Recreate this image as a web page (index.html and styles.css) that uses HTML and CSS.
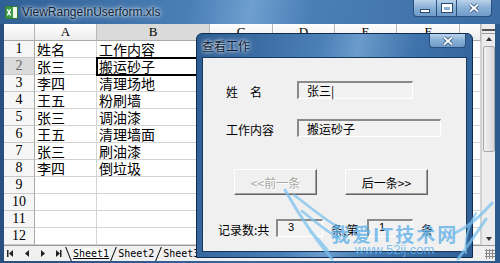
FILE: index.html
```html
<!DOCTYPE html>
<html lang="zh-CN">
<head>
    <meta charset="UTF-8">
    <title>ViewRangeInUserform.xls</title>
    <link rel="stylesheet" href="styles.css">
</head>
<body>
    <div class="window">
        <!-- Excel title bar -->
        <div class="titlebar">
            <svg class="app-icon" width="13" height="13" viewBox="0 0 13 13">
                <rect x="0.5" y="0.5" width="12" height="12" fill="#eef6e8" stroke="#2f7a35"/>
                <rect x="1" y="1" width="7" height="11" fill="#3c9a44"/>
                <path d="M2.3 3.3l3.4 6M5.7 3.3l-3.4 6" stroke="#fff" stroke-width="1.4"/>
            </svg>
            <span class="title">ViewRangeInUserform.xls</span>
            <div class="caption">
                <span class="cbtn min"><i class="min-glyph"></i></span>
                <span class="cbtn max"><i class="max-glyph"></i></span>
                <span class="cbtn close">
                    <svg width="12" height="10" viewBox="0 0 12 10"><path d="M2 1.5l8 7M10 1.5l-8 7" stroke="#27466b" stroke-width="3.4"/><path d="M2 1.5l8 7M10 1.5l-8 7" stroke="#fff" stroke-width="2"/></svg>
                </span>
            </div>
        </div>

        <!-- worksheet -->
        <div class="workarea">
            <div class="sheet">
                <div class="row hdr"><span class="corner"></span><span>A</span><span class="sel">B</span><span>C</span><span>D</span><span>E</span><span>F</span><span></span></div>
                <div class="row"><span class="rn">1</span><span>姓名</span><span>工作内容</span><span></span><span></span><span></span><span></span><span></span></div>
                <div class="row"><span class="rn sel">2</span><span>张三</span><span class="active">搬运砂子</span><span></span><span></span><span></span><span></span><span></span></div>
                <div class="row"><span class="rn">3</span><span>李四</span><span>清理场地</span><span></span><span></span><span></span><span></span><span></span></div>
                <div class="row"><span class="rn">4</span><span>王五</span><span>粉刷墙</span><span></span><span></span><span></span><span></span><span></span></div>
                <div class="row"><span class="rn">5</span><span>张三</span><span>调油漆</span><span></span><span></span><span></span><span></span><span></span></div>
                <div class="row"><span class="rn">6</span><span>王五</span><span>清理墙面</span><span></span><span></span><span></span><span></span><span></span></div>
                <div class="row"><span class="rn">7</span><span>张三</span><span>刷油漆</span><span></span><span></span><span></span><span></span><span></span></div>
                <div class="row"><span class="rn">8</span><span>李四</span><span>倒垃圾</span><span></span><span></span><span></span><span></span><span></span></div>
                <div class="row"><span class="rn">9</span><span></span><span></span><span></span><span></span><span></span><span></span><span></span></div>
                <div class="row"><span class="rn">10</span><span></span><span></span><span></span><span></span><span></span><span></span><span></span></div>
                <div class="row"><span class="rn">11</span><span></span><span></span><span></span><span></span><span></span><span></span><span></span></div>
                <div class="row"><span class="rn">12</span><span></span><span></span><span></span><span></span><span></span><span></span><span></span></div>
            </div>
            <div class="vscroll">
                <span class="split"></span>
                <span class="arrow up"></span>
                <span class="thumb"></span>
                <span class="track"></span>
                <span class="arrow down"></span>
            </div>
        </div>

        <!-- sheet tabs -->
        <div class="tabbar">
            <svg class="nav" width="60" height="9" viewBox="0 0 60 9">
                <rect x="3" y="1" width="1.5" height="7" fill="#222"/>
                <path d="M9 1v7L5 4.5z" fill="#222"/>
                <path d="M25 1v7l-4-3.5z" fill="#222"/>
                <path d="M37 1v7l4-3.5z" fill="#222"/>
                <path d="M52 1v7l4-3.5z" fill="#222"/>
                <rect x="56" y="1" width="1.5" height="7" fill="#222"/>
            </svg>
            <i class="slash back"></i>
            <span class="tab current">Sheet1</span>
            <i class="slash"></i>
            <span class="tab">Sheet2</span>
            <i class="slash"></i>
            <span class="tab">Sheet3</span>
            <span class="grip"></span>
        </div>

        <!-- UserForm dialog -->
        <div class="dialog">
            <div class="dlg-title">
                <span class="dlg-caption">查看工作</span>
                <span class="dlg-close">
                    <svg width="12" height="10" viewBox="0 0 12 10"><path d="M2 1.5l8 7M10 1.5l-8 7" stroke="#27466b" stroke-width="3.4"/><path d="M2 1.5l8 7M10 1.5l-8 7" stroke="#fff" stroke-width="2"/></svg>
                </span>
            </div>
            <div class="dlg-body">
                <div class="field">
                    <span class="label">姓　名</span>
                    <span class="textbox name">张三|</span>
                </div>
                <div class="field">
                    <span class="label">工作内容</span>
                    <span class="textbox job">搬运砂子</span>
                </div>
                <div class="buttons">
                    <span class="btn disabled">&lt;&lt;前一条</span>
                    <span class="btn">后一条&gt;&gt;</span>
                </div>
                <div class="record">
                    <span class="rec-label">记录数:共</span>
                    <span class="textbox num">3</span>
                    <span class="rec-mid">条,第</span>
                    <span class="textbox num">1</span>
                    <span class="rec-end">条</span>
                </div>
            </div>
        </div>

        <!-- site watermark -->
        <svg class="wings" width="220" height="80" viewBox="0 0 220 80">
            <g fill="none" stroke="#7cc2ef" stroke-linecap="round" opacity="0.75">
                <path d="M5 7 C 18 30, 32 52, 52 76" stroke-width="3"/>
                <path d="M14 12 C 30 24, 44 36, 58 44" stroke-width="2.5"/>
                <path d="M22 28 C 34 38, 46 48, 60 56" stroke-width="2.5"/>
                <path d="M30 48 C 38 56, 44 62, 48 68" stroke-width="2.5"/>
                <path d="M212 20 C 200 34, 188 44, 175 50" stroke-width="3"/>
                <path d="M206 36 C 198 48, 190 60, 178 76" stroke-width="3"/>
                <path d="M196 30 C 188 44, 184 56, 186 70" stroke-width="2"/>
            </g>
        </svg>
        <div class="mark">
            <span class="mark-big">我爱IT技术网</span>
            <span class="mark-url">www.52ij.com</span>
        </div>
    </div>
</body>
</html>
```

FILE: styles.css
```css
* {
    box-sizing: border-box;
}
body {
    margin: 0;
    font-family: "Noto Sans CJK SC", sans-serif;
}
.window {
    position: relative;
    width: 500px;
    height: 263px;
    display: flex;
    flex-direction: column;
    padding-bottom: 6px;
    background: linear-gradient(90deg, #274f7f, #3566a0 50%, #2c5a8e);
    overflow: hidden;
}

/* title bar */
.titlebar {
    height: 24px;
    flex-shrink: 0;
    display: flex;
    align-items: center;
    padding-left: 5px;
    background: linear-gradient(100deg, #2f5f95 0%, #4a7fb6 38%, #6e9fcf 50%, #4a7fb6 62%, #3a6ca3 100%);
}
.app-icon {
    margin-right: 4px;
}
.title {
    font-family: "Liberation Sans", sans-serif;
    font-size: 12px;
    color: #0d1f38;
    text-shadow: 0 0 3px #fff, 0 0 6px rgba(255, 255, 255, 0.8);
}
.caption {
    margin-left: auto;
    margin-right: 8px;
    align-self: flex-start;
    display: flex;
}
.cbtn {
    height: 17px;
    display: flex;
    align-items: center;
    justify-content: center;
    background: linear-gradient(#b9d2ea, #88afd6 50%, #6f9bc8);
    border: 1px solid #284f7e;
    border-top: none;
}
.cbtn.min {
    width: 24px;
    border-radius: 0 0 0 4px;
}
.cbtn.max {
    width: 20px;
    border-left: none;
}
.cbtn.close {
    width: 35px;
    border-left: none;
    border-radius: 0 0 4px 0;
}
.min-glyph {
    width: 10px;
    height: 4px;
    margin-top: 6px;
    background: #fff;
    border: 1px solid #2b4a70;
}
.max-glyph {
    width: 10px;
    height: 8px;
    border: 2px solid #fff;
    border-top-width: 3px;
    outline: 1px solid #2b4a70;
}

/* worksheet */
.workarea {
    flex: 1;
    display: flex;
    margin: 0 5px 0 4px;
}
.sheet {
    flex: 1;
    display: flex;
    flex-direction: column;
    background: #fff;
}
.row {
    flex: 1;
    display: grid;
    grid-template-columns: 31px 62px 113px 63px 62px 62px 63px 1fr;
}
.row.hdr {
    flex: 0 0 17px;
}
.row > span {
    display: flex;
    align-items: center;
    padding-left: 2px;
    font-size: 14px;
    line-height: 16px;
    white-space: nowrap;
    border-right: 1px solid #d4d4d4;
    border-bottom: 1px solid #d4d4d4;
}
.hdr > span {
    justify-content: center;
    padding-left: 0;
    font-family: "Liberation Serif", serif;
    font-size: 13px;
    background: linear-gradient(#ffffff, #ececec);
    border-right-color: #b8b8b8;
    border-bottom-color: #a8a8a8;
}
.row > .rn {
    justify-content: center;
    padding-left: 0;
    font-family: "Liberation Serif", serif;
    background: #f6f6f6;
    border-right-color: #a8a8a8;
    border-bottom-color: #c8c8c8;
}
.row > .sel {
    background: #dadada;
}
.rn.sel {
    color: #666;
}
.active {
    outline: 2px solid #000;
    outline-offset: -1px;
    position: relative;
}

/* vertical scroll bar */
.vscroll {
    width: 14px;
    display: flex;
    flex-direction: column;
    align-items: center;
    background: #ececec;
    border-left: 1px solid #d0d0d0;
}
.split {
    width: 13px;
    height: 5px;
    margin-top: 5px;
    border-top: 2px solid #555;
    border-bottom: 1px solid #999;
}
.arrow {
    width: 0;
    height: 0;
    margin: 3px 0;
    border-left: 3px solid transparent;
    border-right: 3px solid transparent;
}
.arrow.up {
    border-bottom: 4px solid #333;
}
.arrow.down {
    border-top: 4px solid #333;
    margin-bottom: 4px;
}
.thumb {
    width: 12px;
    height: 106px;
    margin-top: 2px;
    border: 1px solid #a8a8a8;
    border-radius: 2px;
    background: linear-gradient(90deg, #f2f2f2, #d8d8d8);
}
.track {
    flex: 1;
}

/* sheet tabs */
.tabbar {
    height: 16px;
    flex-shrink: 0;
    margin: 0 5px 0 4px;
    display: flex;
    align-items: center;
    background: #f0f0f0;
    border-top: 1px solid #9a9a9a;
    font-family: "DejaVu Sans Mono", monospace;
    font-size: 10px;
    color: #000;
}
.nav {
    flex-shrink: 0;
}
.slash {
    width: 0;
    height: 14px;
    margin: 0 4px;
    border-left: 1px solid #000;
    transform: skewX(-22deg);
}
.slash.back {
    transform: skewX(22deg);
}
.tab.current {
    text-decoration: underline;
    background: #fff;
}
.grip {
    margin-left: auto;
    width: 10px;
    height: 10px;
    background: radial-gradient(circle, #888 1px, transparent 1.2px) 0 0 / 3px 3px;
}

/* dialog */
.dialog {
    position: absolute;
    left: 196px;
    top: 33px;
    width: 277px;
    height: 225px;
    display: flex;
    flex-direction: column;
    padding: 0 5px 5px;
    border: 1px solid #0f2d52;
    border-radius: 6px 6px 0 0;
    background: linear-gradient(100deg, #2c5b91 0%, #4b80b7 40%, #6a9bcb 52%, #3f73ab 70%, #2e5e94 100%);
}
.dlg-title {
    height: 23px;
    display: flex;
    align-items: center;
}
.dlg-caption {
    font-size: 12px;
    color: #0d1f38;
    text-shadow: 0 0 3px #fff, 0 0 6px rgba(255, 255, 255, 0.8);
}
.dlg-close {
    margin-left: auto;
    margin-right: 1px;
    align-self: flex-start;
    width: 37px;
    height: 14px;
    display: flex;
    align-items: center;
    justify-content: center;
    background: linear-gradient(#b9d2ea, #88afd6 50%, #6f9bc8);
    border: 1px solid #284f7e;
    border-top: none;
    border-radius: 0 0 4px 4px;
}
.dlg-body {
    flex: 1;
    background: #f0f0f0;
    border: 1px solid #16385f;
    padding-top: 21px;
    font-size: 12px;
    color: #000;
}
.field {
    display: grid;
    grid-template-columns: 71px auto;
    align-items: center;
    margin-left: 23px;
    margin-bottom: 17px;
}
.label {
    padding-top: 4px;
}
.textbox {
    height: 18px;
    display: flex;
    align-items: center;
    padding-left: 8px;
    border-top: 2px solid #8a8a8a;
    border-left: 2px solid #8a8a8a;
    border-right: 1px solid #fff;
    border-bottom: 1px solid #fff;
    background: #f2f2f2;
}
.textbox.name {
    width: 116px;
}
.textbox.job {
    width: 144px;
}
.buttons {
    display: flex;
    gap: 28px;
    margin: 31px 0 0 31px;
}
.btn {
    width: 83px;
    height: 26px;
    display: flex;
    align-items: center;
    justify-content: center;
    background: #f0f0f0;
    border-top: 1px solid #fff;
    border-left: 1px solid #fff;
    border-right: 1px solid #646464;
    border-bottom: 1px solid #646464;
    box-shadow: inset -1px -1px #a0a0a0;
}
.btn.disabled {
    color: #a8a8a8;
    text-shadow: 1px 1px #fff;
}
.record {
    display: flex;
    align-items: center;
    margin: 23px 0 0 15px;
}
.rec-label {
    width: 58px;
    padding-top: 3px;
}
.textbox.num {
    padding-left: 10px;
    align-items: flex-start;
    font-family: "Liberation Sans", sans-serif;
    font-size: 11px;
    line-height: 12px;
}
.record .textbox.num:nth-of-type(2) {
    width: 47px;
}
.record .textbox.num:nth-of-type(4) {
    width: 46px;
}
.rec-mid {
    width: 44px;
    padding: 3px 0 0 8px;
}
.rec-end {
    padding: 3px 0 0 8px;
}

/* watermark */
.wings {
    position: absolute;
    left: 280px;
    top: 183px;
}
.mark {
    position: absolute;
    left: 331px;
    top: 224px;
    display: flex;
    flex-direction: column;
    align-items: center;
    color: rgba(96, 176, 232, 0.8);
    line-height: 1;
}
.mark-big {
    font-size: 19px;
    font-weight: bold;
    letter-spacing: 2px;
}
.mark-url {
    font-family: "Liberation Sans", sans-serif;
    font-size: 13px;
    margin-top: 0;
}
```
